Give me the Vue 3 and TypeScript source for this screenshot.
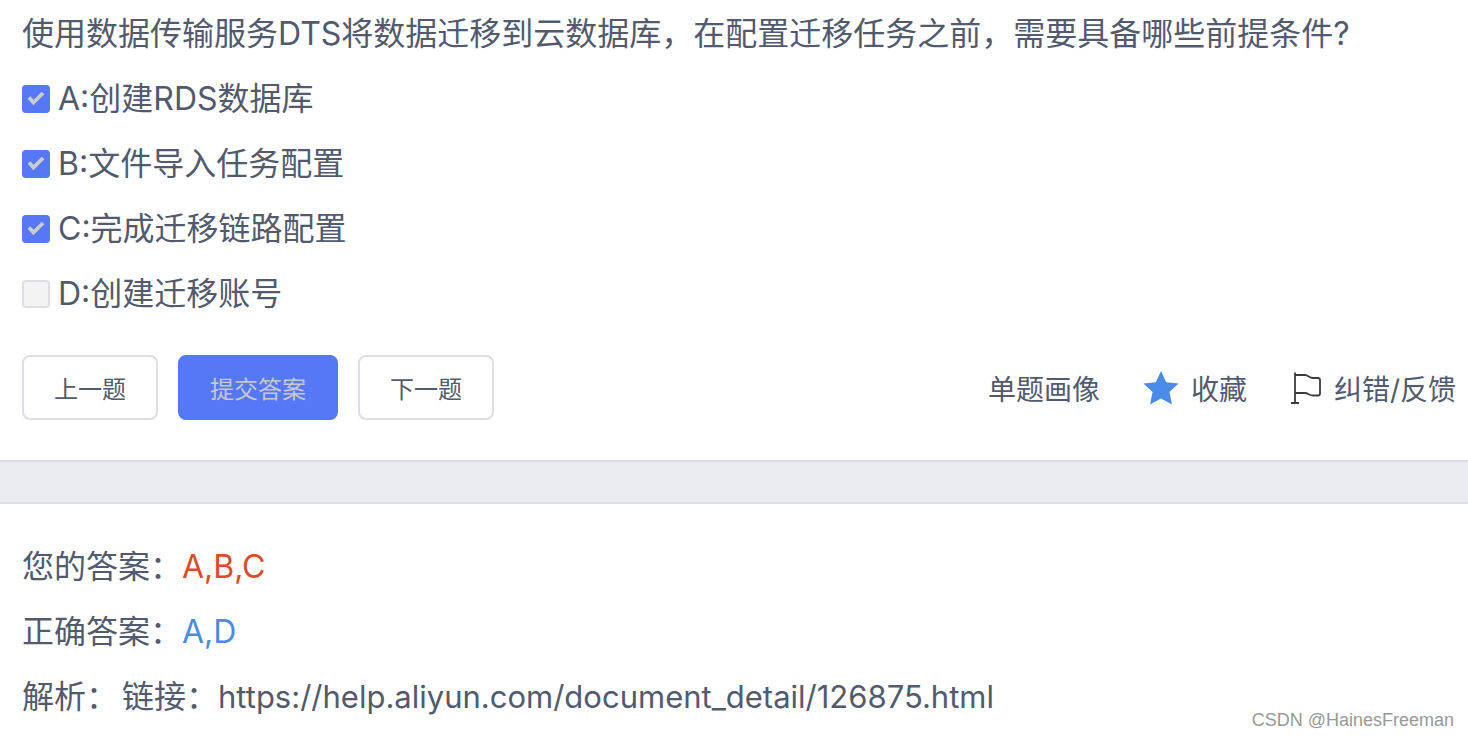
<script setup lang="ts">
import { ref } from 'vue'

interface Option {
  key: string
  text: string
  checked: boolean
}

const options = ref<Option[]>([
  { key: 'A', text: '创建RDS数据库', checked: true },
  { key: 'B', text: '文件导入任务配置', checked: true },
  { key: 'C', text: '完成迁移链路配置', checked: true },
  { key: 'D', text: '创建迁移账号', checked: false },
])

const answer = 'A,B,C'
const correct = 'A,D'
const link = 'https://help.aliyun.com/document_detail/126875.html'
</script>

<template>
  <main class="page">
    <section class="question">
      <h1 class="title">使用数据传输服务DTS将数据迁移到云数据库，在配置迁移任务之前，需要具备哪些前提条件?</h1>
      <label v-for="o in options" :key="o.key" class="option">
        <span class="tick">
          <input v-model="o.checked" type="checkbox" disabled />
          <svg v-if="o.checked" viewBox="0 0 28 28" aria-hidden="true">
            <path d="M7 12.5 11.500 17.500 21 8" fill="none" stroke="#cccccc" stroke-width="3.8" />
          </svg>
        </span>
        <span>{{ o.key }}:{{ o.text }}</span>
      </label>
      <div class="toolbar">
        <div class="buttons">
          <button type="button" class="btn">上一题</button>
          <button type="button" class="btn primary" disabled>提交答案</button>
          <button type="button" class="btn">下一题</button>
        </div>
        <div class="actions">
          <button type="button" class="action">单题画像</button>
          <button type="button" class="action">
            <svg class="star" viewBox="0 0 36 36" aria-hidden="true">
              <path d="M18 1 23.2 12.2 35.6 13.4 26.4 21.9 29 34.6 18 28.6 7 34.6 9.6 21.9 .4 13.4 12.8 12.2Z" fill="#4a8be9" />
            </svg>
            收藏
          </button>
          <button type="button" class="action">
            <svg class="flag" viewBox="0 0 32 36" aria-hidden="true">
              <path
                d="M5 2.500V33M1 33H9M5 5H15C18 5 19.500 8 23 8H28Q30 8 30 10V23.500Q30 25.500 28 25.500H23C19.500 25.500 18 23 15 23H5"
                fill="none"
                stroke="#3c3c3c"
                stroke-width="1.8"
              />
            </svg>
            纠错/反馈
          </button>
        </div>
      </div>
    </section>
    <div class="divider"></div>
    <section class="result">
      <p>您的答案：<span class="wrong">{{ answer }}</span></p>
      <p>正确答案：<span class="right">{{ correct }}</span></p>
      <p class="analysis"><span>解析：</span><span>链接：<span class="link">{{ link }}</span></span></p>
    </section>
    <div class="watermark">CSDN @HainesFreeman</div>
  </main>
</template>

<style>
body {
  margin: 0;
  background: #fff;
}
</style>

<style scoped>
.page {
  position: relative;
  min-height: 100vh;
  overflow: hidden;
  box-sizing: border-box;
  font-family: Inter, 'Noto Sans CJK SC', sans-serif;
  font-size: 32px;
  line-height: 65px;
  color: #515a6e;
}
.question {
  padding: 1px 12px 40px 22px;
}
.title {
  margin: 0;
  font-size: 32px;
  font-weight: 400;
  white-space: nowrap;
}
.option {
  display: flex;
  align-items: center;
  gap: 8px;
}
.tick {
  display: grid;
  width: 28px;
  height: 28px;
}
.tick > * {
  grid-area: 1 / 1;
}
.tick svg {
  position: relative;
  width: 28px;
  height: 28px;
}
.tick input {
  appearance: none;
  box-sizing: border-box;
  width: 28px;
  height: 28px;
  margin: 0;
  border: 2px solid #dcdee2;
  border-radius: 4px;
  background: #f3f3f3;
}
.tick input:checked {
  border-color: #5578f7;
  background: #5578f7;
}
.toolbar {
  display: flex;
  justify-content: space-between;
  align-items: center;
  margin-top: 29px;
}
.buttons {
  display: flex;
  gap: 20px;
}
.btn {
  box-sizing: border-box;
  height: 65px;
  padding: 0 30px;
  border: 2px solid #dcdee2;
  border-radius: 8px;
  background: #fff;
  color: #515a6e;
  font-family: inherit;
  font-size: 24px;
}
.btn.primary {
  border-color: #5578f7;
  background: #5578f7;
  color: #c5c8ce;
}
.actions {
  display: flex;
  gap: 43px;
}
.action {
  display: flex;
  align-items: center;
  gap: 12px;
  padding: 0;
  border: 0;
  background: none;
  color: #515a6e;
  font-family: inherit;
  font-size: 28px;
}
.star {
  width: 36px;
  height: 36px;
}
.flag {
  width: 32px;
  height: 36px;
}
.divider {
  height: 40px;
  border-top: 2px solid #dcdee2;
  border-bottom: 2px solid #dcdee2;
  background: #ebecf1;
}
.result {
  padding: 30px 22px 0;
}
.result p {
  margin: 0;
}
.analysis {
  display: flex;
  gap: 4px;
}
.link {
  font-size: 31px;
}
.wrong {
  color: #e04a24;
}
.right {
  color: #4a8be9;
}
.watermark {
  position: absolute;
  right: 14px;
  bottom: 6px;
  font-family: 'Liberation Sans', Arial, sans-serif;
  font-size: 18px;
  line-height: 20px;
  color: #999;
}
</style>
